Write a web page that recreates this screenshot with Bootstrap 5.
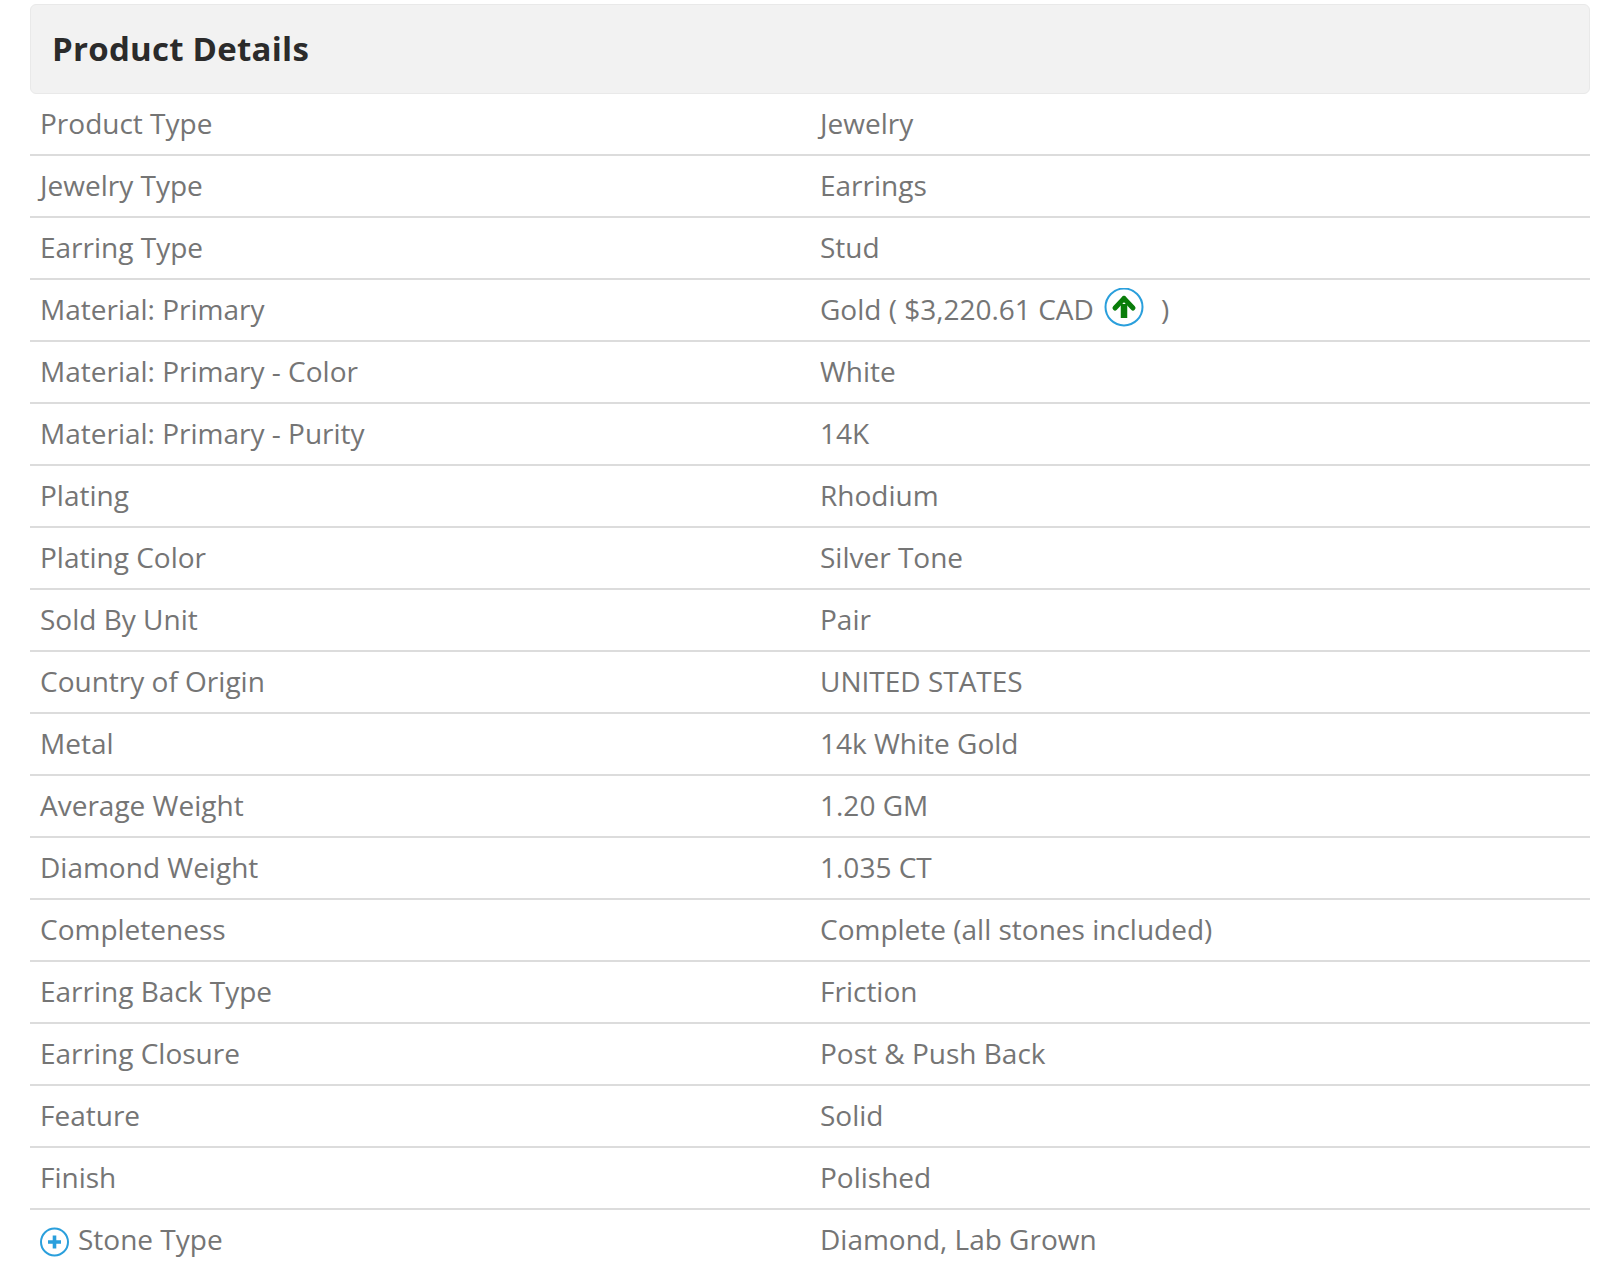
<!DOCTYPE html>
<html lang="en"><head><meta charset="utf-8">
<title>Product Details</title>
<link href="https://cdn.jsdelivr.net/npm/bootstrap@5.3.0/dist/css/bootstrap.min.css" rel="stylesheet">
<style>
body{font-family:"Open Sans",sans-serif;background:#fff;color:#757575;font-size:28px;}
.sheet{padding:4px 30px 0 30px;}
.head-box{height:90px;background:#f2f2f2;border:1px solid #e9e9e9;border-radius:6px;display:flex;align-items:center;padding:0 21px;}
.head-box h2{font-size:33px;font-weight:700;color:#2b2b2b;margin:0;font-family:"Open Sans",sans-serif;letter-spacing:.25px;}
.spec{height:62px;border-bottom:2px solid #dcdcdc;margin:0;}
.spec:last-child{border-bottom-color:transparent;}
.spec>div{padding:0 10px 2px;line-height:1;display:flex;align-items:center;}
.ico-up{flex:none;margin:0 10px;}
.ico-plus{flex:none;margin-right:8px;}
</style></head><body>
<div class="sheet">
<div class="head-box"><h2>Product Details</h2></div>
<div class="row spec"><div class="col-6">Product Type</div><div class="col-6">Jewelry</div></div>
<div class="row spec"><div class="col-6">Jewelry Type</div><div class="col-6">Earrings</div></div>
<div class="row spec"><div class="col-6">Earring Type</div><div class="col-6">Stud</div></div>
<div class="row spec"><div class="col-6">Material: Primary</div><div class="col-6">Gold ( $3,220.61 CAD <svg class="ico-up" width="40" height="42" viewBox="0 0 40 42"><circle cx="20" cy="19" r="18.5" fill="none" stroke="#2a9fdc" stroke-width="2"/><path d="M20 30V16" fill="none" stroke="#0a7d0a" stroke-width="6.500"/><path d="M20 10.500l-9 9.500" fill="none" stroke="#0a7d0a" stroke-width="5" stroke-linecap="round"/><path d="M20 10.500l9 9.500" fill="none" stroke="#0a7d0a" stroke-width="5" stroke-linecap="round"/></svg>&nbsp;)</div></div>
<div class="row spec"><div class="col-6">Material: Primary - Color</div><div class="col-6">White</div></div>
<div class="row spec"><div class="col-6">Material: Primary - Purity</div><div class="col-6">14K</div></div>
<div class="row spec"><div class="col-6">Plating</div><div class="col-6">Rhodium</div></div>
<div class="row spec"><div class="col-6">Plating Color</div><div class="col-6">Silver Tone</div></div>
<div class="row spec"><div class="col-6">Sold By Unit</div><div class="col-6">Pair</div></div>
<div class="row spec"><div class="col-6">Country of Origin</div><div class="col-6">UNITED STATES</div></div>
<div class="row spec"><div class="col-6">Metal</div><div class="col-6">14k White Gold</div></div>
<div class="row spec"><div class="col-6">Average Weight</div><div class="col-6">1.20 GM</div></div>
<div class="row spec"><div class="col-6">Diamond Weight</div><div class="col-6">1.035 CT</div></div>
<div class="row spec"><div class="col-6">Completeness</div><div class="col-6">Complete (all stones included)</div></div>
<div class="row spec"><div class="col-6">Earring Back Type</div><div class="col-6">Friction</div></div>
<div class="row spec"><div class="col-6">Earring Closure</div><div class="col-6">Post &amp; Push Back</div></div>
<div class="row spec"><div class="col-6">Feature</div><div class="col-6">Solid</div></div>
<div class="row spec"><div class="col-6">Finish</div><div class="col-6">Polished</div></div>
<div class="row spec"><div class="col-6"><svg class="ico-plus" width="30" height="36" viewBox="0 0 30 36"><circle cx="14.500" cy="21" r="13.500" fill="none" stroke="#2a9fdc" stroke-width="2"/><path d="M14.500 14.500v13M8 21h13" stroke="#2a9fdc" stroke-width="3.600" fill="none"/></svg>Stone Type</div><div class="col-6">Diamond, Lab Grown</div></div>
</div>
</body></html>
